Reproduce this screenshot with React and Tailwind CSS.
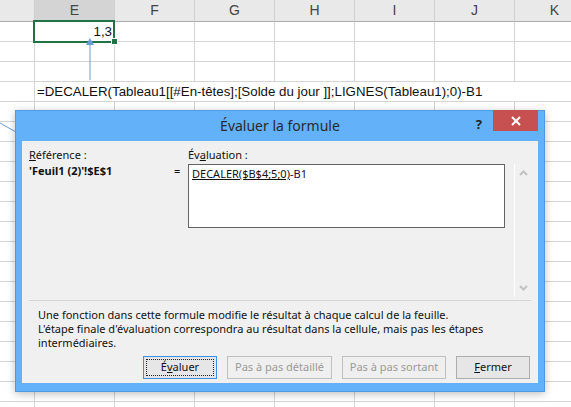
import React from 'react';

const COLS = [
  { k: 'D', w: 'w-[35px]', label: '' },
  { k: 'E', w: 'w-[80px]', label: 'E' },
  { k: 'F', w: 'w-[80px]', label: 'F' },
  { k: 'G', w: 'w-[80px]', label: 'G' },
  { k: 'H', w: 'w-[80px]', label: 'H' },
  { k: 'I', w: 'w-[80px]', label: 'I' },
  { k: 'J', w: 'w-[80px]', label: 'J' },
  { k: 'K', w: 'w-[80px]', label: 'K' },
];

const ROWS = Array.from({ length: 20 }, (_, i) => i + 1);

function HeaderRow() {
  return (
    <div className="flex h-[22px]">
      {COLS.map((c) => (
        <div
          key={c.k}
          className={`${c.w} shrink-0 h-full border-r border-b border-r-[#d0d0d0] border-b-[#ababab] flex items-center justify-center text-[14px] text-[#444] ${c.k === 'E' ? 'bg-[#d4d4d4]' : 'bg-[#e9e9e9]'}`}
        >
          {c.label}
        </div>
      ))}
    </div>
  );
}

function Row({ n }) {
  if (n === 4) {
    return (
      <div className="flex h-[20px]">
        <div className="w-[35px] shrink-0 h-full border-r border-b border-[#d4d4d4]" />
        <div className="flex-1 h-full border-b border-[#d4d4d4] flex items-end pl-[2px] pb-[1px] text-[13.3px] leading-[16px] text-[#111] whitespace-nowrap">
          =DECALER(Tableau1[[#En-têtes];[Solde du jour ]];LIGNES(Tableau1);0)-B1
        </div>
      </div>
    );
  }
  return (
    <div className="flex h-[20px]">
      {COLS.map((c) => (
        <div
          key={c.k}
          className={`${c.w} shrink-0 h-full border-r border-b border-[#d4d4d4] flex items-end justify-end pr-[2px] pb-[1px] text-[13.3px] leading-[16px] text-[#111]`}
        >
          {n === 1 && c.k === 'E' ? '1,3' : ''}
        </div>
      ))}
    </div>
  );
}

function Btn({ children, primary, disabled, w }) {
  return (
    <div
      className={`${w} h-[23px] shrink-0 border flex items-center justify-center text-[11px] ${
        primary
          ? 'border-[#3c8fe6] bg-[#e6e6e6] text-[#111]'
          : disabled
          ? 'border-[#bfbfbf] bg-[#efefef] text-[#9a9a9a]'
          : 'border-[#adadad] bg-[#e6e6e6] text-[#111]'
      }`}
    >
      {primary ? (
        <div className="w-[68px] h-[17px] border border-dotted border-[#222] flex items-center justify-center">
          {children}
        </div>
      ) : (
        children
      )}
    </div>
  );
}

function Chevron({ up }) {
  return (
    <svg width="9" height="6" viewBox="0 0 9 6">
      {up ? (
        <polyline points="1,5 4.5,1.5 8,5" fill="none" stroke="#c2c2c2" strokeWidth="2" />
      ) : (
        <polyline points="1,1 4.5,4.5 8,1" fill="none" stroke="#c2c2c2" strokeWidth="2" />
      )}
    </svg>
  );
}

function Dialog() {
  return (
    <div className="absolute left-[15px] top-[110px] w-[530px] h-[282px] bg-[#63b1f8] border border-[#4d9be6] shadow-[0_2px_8px_rgba(0,0,0,0.25)] flex flex-col font-['Noto_Sans',sans-serif]">
      <div className="h-[30px] shrink-0 grid grid-cols-[1fr_auto_1fr]">
        <div />
        <div className="pt-[4px] text-[14px] text-[#2a2a2a] leading-[22px]">Évaluer la formule</div>
        <div className="flex justify-end items-start pr-[6px]">
          <div className="mt-[5px] mr-[11px] text-[13px] font-bold text-[#222] leading-[16px]">?</div>
          <div className="w-[45px] h-[21px] bg-[#c75050] flex items-center justify-center -mt-[1px]">
            <svg width="10" height="10" viewBox="0 0 10 10">
              <line x1="1" y1="1" x2="9" y2="9" stroke="#fff" strokeWidth="2" />
              <line x1="9" y1="1" x2="1" y2="9" stroke="#fff" strokeWidth="2" />
            </svg>
          </div>
        </div>
      </div>
      <div className="mx-[6px] h-[242px] bg-[#f0f0f0] flex flex-col text-[11px] text-[#111]">
        <div className="h-[159px] shrink-0 flex pl-[7px] pt-[6px]">
          <div className="w-[145px] shrink-0 leading-[16px]">
            <div>
              <span className="underline">R</span>éférence :
            </div>
            <div className="font-bold">'Feuil1 (2)'!$E$1</div>
          </div>
          <div className="w-[14px] shrink-0 pt-[16px] leading-[16px]">=</div>
          <div className="w-[317px] shrink-0 flex flex-col leading-[16px]">
            <div>
              Év<span className="underline">a</span>luation :
            </div>
            <div className="mt-[1px] h-[64px] bg-white border border-[#646464] px-[3px] pt-[1px] leading-[15px]">
              <span className="underline text-[#111]">DECALER($B$4;5;0)</span>
              <span className="text-[#1b0a40]">-B1</span>
            </div>
          </div>
          <div className="ml-[9px] mt-[17px] w-[17px] h-[133px] border-l border-white flex flex-col items-center justify-between py-[6px]">
            <Chevron up />
            <Chevron />
          </div>
        </div>
        <div className="mx-[7px] h-px bg-[#d6d6d6] shrink-0" />
        <div className="pl-[16px] pt-[7px] leading-[14px] whitespace-nowrap">
          Une fonction dans cette formule modifie le résultat à chaque calcul de la feuille.
          <br />
          L'étape finale d'évaluation correspondra au résultat dans la cellule, mais pas les étapes
          <br />
          intermédiaires.
        </div>
        <div className="mt-[6px] flex justify-end gap-[10px] pr-[8px]">
          <Btn primary w="w-[74px]">
            É<span className="underline">v</span>aluer
          </Btn>
          <Btn disabled w="w-[105px]">Pas à pas détaillé</Btn>
          <Btn disabled w="w-[104px]">Pas à pas sortant</Btn>
          <Btn w="w-[74px]">
            <span className="underline">F</span>ermer
          </Btn>
        </div>
      </div>
    </div>
  );
}

export default function App() {
  return (
    <div className="relative w-[571px] h-[407px] overflow-hidden bg-white font-['Liberation_Sans',sans-serif]">
      <div className="w-[620px]">
        <HeaderRow />
        {ROWS.map((n) => (
          <Row key={n} n={n} />
        ))}
      </div>
      {/* selection */}
      <div className="absolute left-[33px] top-[20px] w-[82px] h-[23px] border-2 border-[#217346]" />
      <div className="absolute left-[111px] top-[38px] w-[7px] h-[7px] bg-[#217346] border border-white" />
      {/* trace arrows */}
      <svg className="absolute left-0 top-0" width="571" height="407">
        <line x1="90" y1="44" x2="90" y2="80" stroke="#6a9fd6" strokeWidth="1" />
        <polygon points="90,38 86,45 94,45" fill="#6a9fd6" />
        <line x1="0" y1="123" x2="16" y2="132" stroke="#6a9fd6" strokeWidth="1" />
      </svg>
      <Dialog />
    </div>
  );
}
